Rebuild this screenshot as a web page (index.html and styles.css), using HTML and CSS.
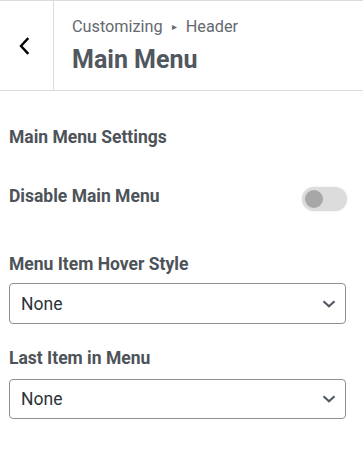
FILE: index.html
```html
<!DOCTYPE html>
<html lang="en">
<head>
<meta charset="utf-8">
<title>Main Menu</title>
<link rel="stylesheet" href="styles.css">
</head>
<body>
<div class="panel">
  <header class="head">
    <button class="back" aria-label="Back">
      <svg width="12" height="18" viewBox="0 0 12 18"><path d="M9.5 2 L3 9 L9.5 16" fill="none" stroke="#000" stroke-width="2.4" stroke-linecap="square"/></svg>
    </button>
    <div class="titles">
      <div class="crumb">Customizing <span class="sep">▸</span> Header</div>
      <div class="title">Main Menu</div>
    </div>
  </header>
  <main class="body">
    <div class="section-title">Main Menu Settings</div>
    <div class="toggle-row">
      <div class="label">Disable Main Menu</div>
      <div class="toggle"><span class="knob"></span></div>
    </div>
    <div class="field first">
      <div class="label">Menu Item Hover Style</div>
      <div class="select">
        <span>None</span>
        <svg width="14" height="8" viewBox="0 0 14 8"><path d="M1.5 1.2 L7 6.3 L12.5 1.2" fill="none" stroke="#50575e" stroke-width="2"/></svg>
      </div>
    </div>
    <div class="field second">
      <div class="label">Last Item in Menu</div>
      <div class="select">
        <span>None</span>
        <svg width="14" height="8" viewBox="0 0 14 8"><path d="M1.5 1.2 L7 6.3 L12.5 1.2" fill="none" stroke="#50575e" stroke-width="2"/></svg>
      </div>
    </div>
  </main>
</div>
</body>
</html>
```

FILE: styles.css
```css
html, body {
  margin: 0;
  padding: 0;
  background: #fff;
}
body {
  font-family: Roboto, "Liberation Sans", sans-serif;
  width: 363px;
  height: 453px;
  overflow: hidden;
}
.panel {
  width: 363px;
}
.head {
  display: flex;
  border-top: 1px solid #dcdcde;
  border-bottom: 1px solid #dcdcde;
  height: 89px;
}
.back {
  width: 54px;
  flex: 0 0 54px;
  border: 0;
  border-right: 1px solid #dcdcde;
  background: #fff;
  padding: 0 6px 0 0;
  margin: 0;
  display: flex;
  align-items: center;
  justify-content: center;
}
.back svg { margin-top: 1px; }
.titles {
  padding: 16px 0 0 18px;
}
.crumb {
  font-size: 16.25px;
  line-height: 20px;
  color: #646970;
}
.crumb .sep {
  font-size: 10px;
  vertical-align: 2px;
  margin: 0 5px;
}
.title {
  margin-top: 8px;
  font-size: 25px;
  line-height: 30px;
  font-weight: 700;
  color: #50575e;
}
.body {
  padding: 0 17px 0 9px;
}
.section-title, .label {
  font-size: 17.5px;
  line-height: 22px;
  font-weight: 700;
  color: #4d5359;
}
.section-title {
  margin-top: 35px;
}
.toggle-row {
  margin-top: 37px;
  display: flex;
  justify-content: space-between;
  align-items: flex-start;
}
.toggle {
  margin-top: 2px;
  width: 45px;
  height: 24px;
  border-radius: 12px;
  background: #dcdcdc;
  box-shadow: 0 0 2px rgba(0,0,0,0.12);
  display: flex;
  align-items: center;
  padding-left: 3px;
  box-sizing: border-box;
  margin-right: -1px;
}
.knob {
  width: 18px;
  height: 18px;
  border-radius: 50%;
  background: #a7a7a7;
}
.field.first { margin-top: 42px; }
.field.second { margin-top: 23px; }
.select {
  margin-top: 8px;
  height: 41px;
  box-sizing: border-box;
  border: 1px solid #8c8f94;
  border-radius: 4px;
  display: flex;
  align-items: center;
  justify-content: space-between;
  padding: 0 9px 0 11px;
  font-size: 17.5px;
  color: #2c3338;
}
.field.second .select {
  margin-top: 10px;
  height: 40px;
}
```
